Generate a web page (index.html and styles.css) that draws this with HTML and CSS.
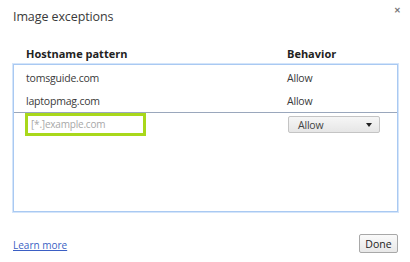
FILE: index.html
```html
<!doctype html>
<html lang="en">

<head>
    <meta charset="UTF-8" />
    <title>Image exceptions</title>
    <link rel="stylesheet" href="styles.css">
</head>

<body>
    <div class="dialog">
        <div class="header">
            <div class="title">Image exceptions</div>
            <div class="close">&#x2715;</div>
        </div>

        <div class="col-heads">
            <div class="col-host">Hostname pattern</div>
            <div class="col-behavior">Behavior</div>
        </div>

        <div class="list">
            <div class="row">
                <div class="col-host">tomsguide.com</div>
                <div class="col-behavior">Allow</div>
            </div>
            <div class="row row-last">
                <div class="col-host">laptopmag.com</div>
                <div class="col-behavior">Allow</div>
            </div>
            <div class="row-edit">
                <div class="pattern-input">[*.]example.com</div>
                <div class="select">
                    <span>Allow</span>
                    <span class="arrow"></span>
                </div>
            </div>
        </div>

        <div class="footer">
            <a href="#" class="learn">Learn more</a>
            <div class="done">Done</div>
        </div>
    </div>
</body>

</html>
```

FILE: styles.css
```css
body {
    margin: 0;
    background: #fff;
    font-family: "Open Sans", "Noto Sans", sans-serif;
    color: #333;
}

.dialog {
    width: 410px;
    height: 262px;
    box-sizing: border-box;
    padding: 0 13px 0 13px;
    display: flex;
    flex-direction: column;
}

.header {
    display: flex;
    justify-content: space-between;
    align-items: flex-start;
    height: 38px;
    padding-top: 8px;
    box-sizing: border-box;
}

.title {
    font-size: 12.5px;
    color: #3a3a3a;
    letter-spacing: -0.1px;
}

.close {
    font-size: 8px;
    line-height: 8px;
    color: #777;
    margin-right: -4px;
    margin-top: -2px;
    font-weight: bold;
}

.col-heads {
    display: flex;
    font-size: 11px;
    font-weight: bold;
    color: #222;
    height: 26px;
    align-items: center;
    padding-left: 13px;
    box-sizing: border-box;
    padding-top: 5px;
}

.col-host {
    width: 261px;
}

.list {
    height: 146px;
    border: 1px solid #a9c9f2;
    box-shadow: 0 0 0 1px #d4e5fa;
    width: 383px;
}

.row {
    display: flex;
    align-items: center;
    height: 24px;
    font-size: 10.5px;
    padding-left: 12px;
    padding-top: 1px;
    box-sizing: border-box;
    letter-spacing: -0.2px;
    color: #3a3a3a;
}

.row-last {
    border-bottom: 1px solid #9aa7bc;
}

.row-edit {
    display: flex;
    align-items: flex-start;
    padding-left: 11px;
}

.pattern-input {
    width: 112px;
    height: 17px;
    border: 3px solid #a9d81b;
    font-size: 10px;
    color: #a8a8a8;
    padding-left: 3px;
    line-height: 17px;
    letter-spacing: -0.2px;
}

.select {
    margin-left: 142px;
    margin-top: 3px;
    width: 92px;
    height: 17px;
    box-sizing: border-box;
    border: 1px solid #c4c4c4;
    border-radius: 2px;
    background: linear-gradient(#f6f6f6, #e6e6e6);
    display: flex;
    align-items: center;
    justify-content: space-between;
    padding: 0 7px 0 9px;
    font-size: 10.5px;
    color: #444;
    letter-spacing: -0.2px;
}

.arrow {
    width: 0;
    height: 0;
    border-left: 3.5px solid transparent;
    border-right: 3.5px solid transparent;
    border-top: 4px solid #222;
}

.footer {
    display: flex;
    justify-content: space-between;
    align-items: center;
    margin-top: 22px;
}

.learn {
    font-size: 10px;
    color: #3b5fc4;
    text-decoration: underline;
    margin-top: 2px;
}

.done {
    width: 39px;
    height: 19px;
    box-sizing: border-box;
    border: 1px solid #a8a8a8;
    border-radius: 2px;
    background: linear-gradient(#fafafa, #e8e8e8);
    font-size: 10.5px;
    color: #222;
    display: flex;
    align-items: center;
    justify-content: center;
    margin-right: -1px;
}
```
